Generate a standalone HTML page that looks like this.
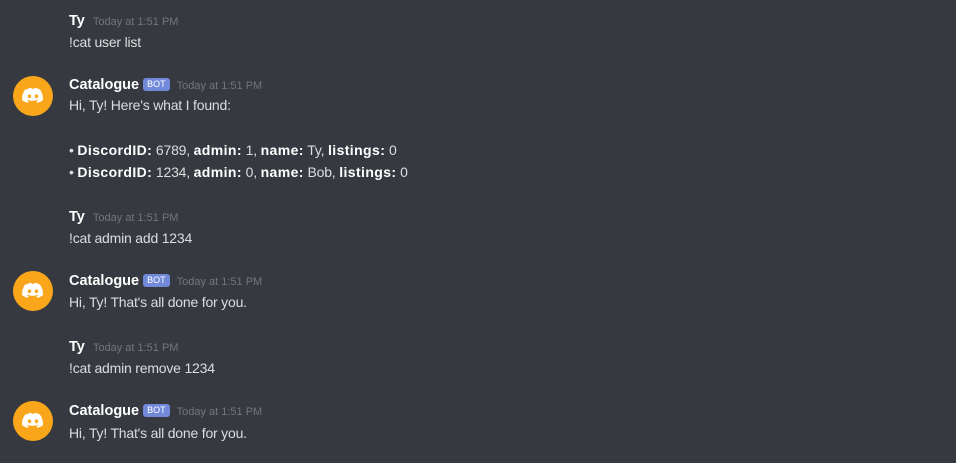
<!DOCTYPE html>
<html><head><meta charset="utf-8"><style>
body{margin:0;width:956px;height:463px;background:#36393f;overflow:hidden;position:relative;font-family:"Liberation Sans",sans-serif;}
.t{position:absolute;left:69px;line-height:20px;height:20px;white-space:nowrap;color:#dcddde;font-size:14px;letter-spacing:-0.2px}
.n{color:#fff;font-weight:bold;font-size:14.5px;letter-spacing:0}
.ts{color:#72767d;font-size:11px;margin-left:8px;letter-spacing:0}
.bot{display:inline-block;background:#7289da;color:#fff;font-size:9px;line-height:13px;height:13px;padding:0 4px;border-radius:3px;margin-left:4px;vertical-align:2px;letter-spacing:0}
.bot+.ts{margin-left:7px}
.av{position:absolute;left:13px;width:40px;height:40px;border-radius:50%;background:#faa61a}
b{color:#fff;letter-spacing:0.4px}
</style></head><body>
<div class="t" style="top:10px"><span class="n">Ty</span><span class="ts">Today at 1:51 PM</span></div>
<div class="t" style="top:32px">!cat user list</div>

<div class="av" style="top:76px"><svg width="40" height="40" viewBox="0 0 40 40"><path fill="#fff" d="M13 13.5c2-1 4-1.5 5.5-1.6l.4.9c.7-.1 1.5-.1 2.2 0l.4-.9c1.5.1 3.5.6 5.5 1.6 2.2 3.3 3.2 6.8 3 10.6-2 1.5-4 2.3-5.6 2.7l-1.1-1.7c.8-.3 1.5-.7 2.1-1.1l-.5-.4c-3.4 1.6-7.3 1.6-10.7 0l-.5.4c.6.4 1.3.8 2.1 1.1l-1.1 1.7c-1.6-.4-3.6-1.2-5.6-2.7-.3-3.8.8-7.3 3-10.6z"/><ellipse cx="16.5" cy="20.3" rx="1.7" ry="1.9" fill="#faa61a"/><ellipse cx="23.5" cy="20.3" rx="1.7" ry="1.9" fill="#faa61a"/></svg></div>
<div class="t" style="top:74px"><span class="n">Catalogue</span><span class="bot">BOT</span><span class="ts">Today at 1:51 PM</span></div>
<div class="t" style="top:95px">Hi, Ty! Here's what I found:</div>
<div class="t" style="top:140px">• <b>DiscordID:</b> 6789, <b>admin:</b> 1, <b>name:</b> Ty, <b>listings:</b> 0</div>
<div class="t" style="top:162px">• <b>DiscordID:</b> 1234, <b>admin:</b> 0, <b>name:</b> Bob, <b>listings:</b> 0</div>

<div class="t" style="top:206px"><span class="n">Ty</span><span class="ts">Today at 1:51 PM</span></div>
<div class="t" style="top:228px">!cat admin add 1234</div>

<div class="av" style="top:271px"><svg width="40" height="40" viewBox="0 0 40 40"><path fill="#fff" d="M13 13.5c2-1 4-1.5 5.5-1.6l.4.9c.7-.1 1.5-.1 2.2 0l.4-.9c1.5.1 3.5.6 5.5 1.6 2.2 3.3 3.2 6.8 3 10.6-2 1.5-4 2.3-5.6 2.7l-1.1-1.7c.8-.3 1.5-.7 2.1-1.1l-.5-.4c-3.4 1.6-7.3 1.6-10.7 0l-.5.4c.6.4 1.3.8 2.1 1.1l-1.1 1.7c-1.6-.4-3.6-1.2-5.6-2.7-.3-3.8.8-7.3 3-10.6z"/><ellipse cx="16.5" cy="20.3" rx="1.7" ry="1.9" fill="#faa61a"/><ellipse cx="23.5" cy="20.3" rx="1.7" ry="1.9" fill="#faa61a"/></svg></div>
<div class="t" style="top:270px"><span class="n">Catalogue</span><span class="bot">BOT</span><span class="ts">Today at 1:51 PM</span></div>
<div class="t" style="top:292px">Hi, Ty! That's all done for you.</div>

<div class="t" style="top:336px"><span class="n">Ty</span><span class="ts">Today at 1:51 PM</span></div>
<div class="t" style="top:358px">!cat admin remove 1234</div>

<div class="av" style="top:401px"><svg width="40" height="40" viewBox="0 0 40 40"><path fill="#fff" d="M13 13.5c2-1 4-1.5 5.5-1.6l.4.9c.7-.1 1.5-.1 2.2 0l.4-.9c1.5.1 3.5.6 5.5 1.6 2.2 3.3 3.2 6.8 3 10.6-2 1.5-4 2.3-5.6 2.7l-1.1-1.7c.8-.3 1.5-.7 2.1-1.1l-.5-.4c-3.4 1.6-7.3 1.6-10.7 0l-.5.4c.6.4 1.3.8 2.1 1.1l-1.1 1.7c-1.6-.4-3.6-1.2-5.6-2.7-.3-3.8.8-7.3 3-10.6z"/><ellipse cx="16.5" cy="20.3" rx="1.7" ry="1.9" fill="#faa61a"/><ellipse cx="23.5" cy="20.3" rx="1.7" ry="1.9" fill="#faa61a"/></svg></div>
<div class="t" style="top:400px"><span class="n">Catalogue</span><span class="bot">BOT</span><span class="ts">Today at 1:51 PM</span></div>
<div class="t" style="top:423px">Hi, Ty! That's all done for you.</div>
</body></html>
